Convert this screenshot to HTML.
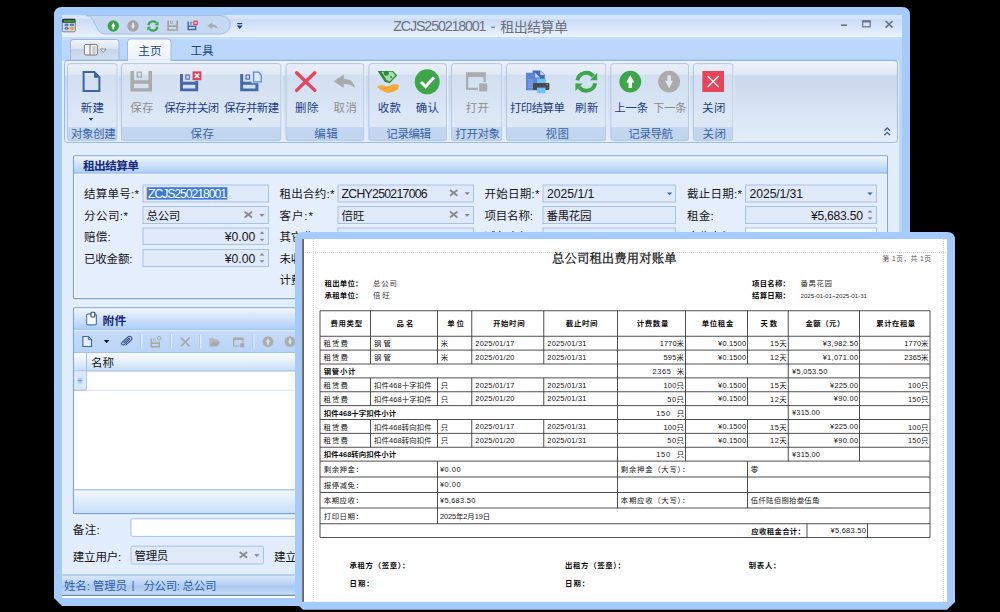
<!DOCTYPE html>
<html lang="zh"><head><meta charset="utf-8"><title>ZCJS250218001 - 租出结算单</title>
<style>
html,body{margin:0;padding:0;background:#000;}
body{width:1000px;height:612px;position:relative;overflow:hidden;font-family:"Liberation Sans",sans-serif;}
svg.layer{position:absolute;left:0;top:0;display:block}
svg.layer text{font-family:"Liberation Sans","Noto Sans CJK SC",sans-serif}
#txt span{position:absolute;white-space:nowrap;overflow:hidden;color:transparent;line-height:1.1;height:1.1em}
#txt{position:absolute;left:0;top:0;width:1000px;height:612px;overflow:hidden}
</style></head><body>
<svg width="0" height="0" style="position:absolute"><defs>
<linearGradient id="gTitle" x1="0" y1="0" x2="0" y2="1"><stop offset="0" stop-color="#d8e6fb"/><stop offset="0.18" stop-color="#d6e4fa"/><stop offset="0.19" stop-color="#c8dbf6"/><stop offset="1" stop-color="#eaf2fd"/></linearGradient>
<linearGradient id="gApp" x1="0" y1="0" x2="0" y2="1"><stop offset="0" stop-color="#f2f5fa"/><stop offset="0.45" stop-color="#d9e3f1"/><stop offset="0.46" stop-color="#c4d4e9"/><stop offset="1" stop-color="#d3e0f0"/></linearGradient>
<linearGradient id="gTab" x1="0" y1="0" x2="0" y2="1"><stop offset="0" stop-color="#f9fbfe"/><stop offset="1" stop-color="#ecf1f9"/></linearGradient>
<linearGradient id="gRib" x1="0" y1="0" x2="0" y2="1"><stop offset="0" stop-color="#eff2fa"/><stop offset="0.18" stop-color="#dfe7f4"/><stop offset="0.185" stop-color="#cad8ec"/><stop offset="1" stop-color="#e4eefb"/></linearGradient>
<linearGradient id="gGrp" x1="0" y1="0" x2="0" y2="1"><stop offset="0" stop-color="#e9eff9"/><stop offset="0.14" stop-color="#e1e9f5"/><stop offset="0.145" stop-color="#d1dff1"/><stop offset="0.82" stop-color="#deE9f7"/><stop offset="0.825" stop-color="#c3d7f0"/><stop offset="1" stop-color="#c1d5ee"/></linearGradient>
<linearGradient id="gHdr" x1="0" y1="0" x2="0" y2="1"><stop offset="0" stop-color="#f0f6ff"/><stop offset="0.3" stop-color="#dbe9fd"/><stop offset="1" stop-color="#adcef8"/></linearGradient>
<linearGradient id="gTb" x1="0" y1="0" x2="0" y2="1"><stop offset="0" stop-color="#c6dcf9"/><stop offset="1" stop-color="#b9d4f7"/></linearGradient>
<linearGradient id="gGh" x1="0" y1="0" x2="0" y2="1"><stop offset="0" stop-color="#fbfdff"/><stop offset="0.4" stop-color="#e9f1fc"/><stop offset="1" stop-color="#c5dcf8"/></linearGradient>
<linearGradient id="gFt" x1="0" y1="0" x2="0" y2="1"><stop offset="0" stop-color="#f4f8fe"/><stop offset="1" stop-color="#c9dff9"/></linearGradient>
<linearGradient id="gSb" x1="0" y1="0" x2="0" y2="1"><stop offset="0" stop-color="#dbe8fb"/><stop offset="0.5" stop-color="#b7d0f3"/><stop offset="0.55" stop-color="#a9c7f0"/><stop offset="1" stop-color="#c9ddf8"/></linearGradient>
</defs></svg>
<svg class="layer" id="win1" width="1000" height="612" viewBox="0 0 1000 612">
<path d="M62 7H902Q910 7 910 15V598L902 606H62L54 598V15Q54 7 62 7Z" fill="#a4cbfb"/>
<rect x="62" y="15" width="840" height="22" fill="url(#gTitle)"/>
<rect x="62" y="36.5" width="840" height="1" fill="#f0f7ff"/>
<rect x="62" y="37.5" width="840" height="1" fill="#b5d3fa"/>
<rect x="62" y="38.5" width="840" height="1" fill="#e1edfd"/>
<rect x="62" y="39.5" width="840" height="22" fill="#bbd8fc"/>
<rect x="62" y="61" width="840" height="514" fill="#e2edfd"/>
<rect x="899" y="38" width="3" height="537" fill="#c0d6f6"/>
<path d="M86 15.5C97 15.5 94 34 105 34H221A9.25 9.25 0 0 0 221 15.5Z" fill="#c6d9f3" stroke="#9fbadf" stroke-width="0.9"/>
<rect x="62.3" y="19" width="13" height="12.8" fill="#dcdad5" rx="1.2" stroke="#6d6a66" stroke-width="0.8"/>
<rect x="62.3" y="19" width="13" height="3.7" fill="#2b2b2b" rx="1"/>
<rect x="63.8" y="20" width="10.8" height="2" fill="#2f9a2f"/>
<ellipse cx="66.6" cy="24.9" rx="2.1" ry="1.4" fill="#2f6fc4"/>
<circle cx="66.6" cy="24.9" r="0.5" fill="#eef3fb"/>
<ellipse cx="71.9" cy="24.9" rx="2.1" ry="1.4" fill="#2f6fc4"/>
<circle cx="71.9" cy="24.9" r="0.5" fill="#eef3fb"/>
<ellipse cx="66.6" cy="28.4" rx="2.1" ry="1.4" fill="#2f6fc4"/>
<circle cx="66.6" cy="28.4" r="0.5" fill="#eef3fb"/>
<ellipse cx="71.9" cy="28.4" rx="2.1" ry="1.4" fill="#f08a24"/>
<circle cx="71.9" cy="28.4" r="0.5" fill="#eef3fb"/>
<circle cx="113.3" cy="26" r="5.7" fill="#3da34a"/>
<path d="M113.3 22.58L115.41 26.46H114.21V29.31H112.39V26.46H111.19Z" fill="#fff"/>
<circle cx="133" cy="26" r="5.7" fill="#a3a3a3"/>
<path d="M133 29.42L135.11 25.54H133.91V22.69H132.09V25.54H130.89Z" fill="#dfe6f0"/>
<path d="M148.36 25.28A4.59 4.59 0 0 1 156.52 23.17" fill="none" stroke="#3da34a" stroke-width="2.02"/>
<path d="M158.5 21.3V25.16H154.75Z" fill="#3da34a"/>
<path d="M157.44 26.72A4.59 4.59 0 0 1 149.28 28.83" fill="none" stroke="#3da34a" stroke-width="2.02"/>
<path d="M147.3 30.7V26.84H151.05Z" fill="#3da34a"/>
<path d="M167.3 20.6H169.05V25.22H176.25V20.6H178V30.81H167.3ZM169.05 26.92H176.25V29.16H169.05Z" fill="#a7a29c" fill-rule="evenodd"/>
<rect x="170.7" y="21.18" width="2.04" height="2.43" fill="none" stroke="#a7a29c" stroke-width="0.63"/>
<path d="M187.4 21.6H188.87V25.49H194.93V21.6H196.4V30.19H187.4ZM188.87 26.92H194.93V28.8H188.87Z" fill="#4468a9" fill-rule="evenodd"/>
<rect x="190.26" y="22.09" width="1.72" height="2.05" fill="none" stroke="#4468a9" stroke-width="0.53"/>
<rect x="192.6" y="20.2" width="5.6" height="5.4" fill="#c8dbf4"/>
<rect x="193.2" y="20.6" width="4.6" height="4.6" fill="#e4405a"/>
<path d="M194.35 21.75L196.65 24.05M196.65 21.75L194.35 24.05" fill="none" stroke="#fff" stroke-width="0.78"/>
<path d="M207.3 25.67L212.15 22.4V24.38C215.22 24.38 217.45 26.36 217.7 28.94C216.21 27.35 214.23 26.96 212.15 26.96V28.94Z" fill="#a9a9a9"/>
<rect x="237.2" y="23" width="5" height="1.2" fill="#1c3d86"/>
<path d="M236.8 25.6H242.6L239.7 29Z" fill="#1c3d86"/>
<text x="393.3" y="31.2" font-size="14.3" fill="#6f7080" textLength="93.2">ZCJS250218001</text>
<rect x="491.3" y="26.6" width="3.6" height="1.2" fill="#6f7080"/>
<text x="500.2" y="31.59" font-size="14" fill="#6f7080" textLength="67.8">租出结算单</text>
<rect x="841" y="24.4" width="6" height="1.6" fill="#6a7283"/>
<rect x="862.6" y="21" width="7.6" height="5.8" fill="none" stroke="#6a7283" stroke-width="1.2"/>
<rect x="862" y="20.4" width="8.8" height="2" fill="#6a7283"/>
<path d="M885.6 21L892.6 27.6M892.6 21L885.6 27.6" fill="none" stroke="#6a7283" stroke-width="1.7"/>
<path d="M70.5 61V42Q70.5 39.5 73 39.5H116.5Q119 39.5 119 42V61Z" fill="url(#gApp)" stroke="#9db6d9" stroke-width="1"/>
<rect x="84.4" y="44.4" width="13" height="10.6" fill="#f4f4f4" rx="1.6" stroke="#777" stroke-width="1"/>
<path d="M90 44.4L90 55" stroke="#777" stroke-width="1" fill="none"/>
<path d="M92.5 47H95.5M92.5 49H95.5M92.5 51H95.5M92.5 53H95.5" fill="none" stroke="#8a8a8a" stroke-width="0.8"/>
<path d="M100.4 49H106L103.2 52.4Z" fill="#f4f4f4" stroke="#777" stroke-width="0.8"/>
<path d="M127.5 61.5V42Q127.5 39 130.5 39H168Q171 39 171 42V61.5Z" fill="url(#gTab)" stroke="#9bb9e2" stroke-width="1"/>
<text x="138.2" y="55.07" font-size="11.6" fill="#20458f" textLength="23.4">主页</text>
<text x="190.6" y="55.07" font-size="11.6" fill="#20458f" textLength="23">工具</text>
<rect x="64.5" y="60.5" width="833" height="82" fill="url(#gRib)" rx="3" stroke="#9dbbe6" stroke-width="1"/>
<path d="M66 60.2L896 60.2" stroke="#8db4ea" stroke-width="1" fill="none"/>
<rect x="128.1" y="59.5" width="42.4" height="2" fill="#ecf1f9"/>
<rect x="67.5" y="63.6" width="49.6" height="77" fill="url(#gGrp)" rx="2.5" stroke="#b3c8e6" stroke-width="1"/>
<path d="M118.2 66L118.2 139" stroke="#f2f6fc" stroke-width="0.8" fill="none"/>
<text x="70.91" y="138.03" font-size="11.5" fill="#3a62a8" textLength="44.78">对象创建</text>
<rect x="121.5" y="63.6" width="159.4" height="77" fill="url(#gGrp)" rx="2.5" stroke="#b3c8e6" stroke-width="1"/>
<path d="M282 66L282 139" stroke="#f2f6fc" stroke-width="0.8" fill="none"/>
<text x="190.5" y="138.03" font-size="11.5" fill="#3a62a8" textLength="23.39">保存</text>
<rect x="286.1" y="63.6" width="77.8" height="77" fill="url(#gGrp)" rx="2.5" stroke="#b3c8e6" stroke-width="1"/>
<path d="M365 66L365 139" stroke="#f2f6fc" stroke-width="0.8" fill="none"/>
<text x="314.31" y="138.03" font-size="11.5" fill="#3a62a8" textLength="23.39">编辑</text>
<rect x="368.9" y="63.6" width="77.6" height="77" fill="url(#gGrp)" rx="2.5" stroke="#b3c8e6" stroke-width="1"/>
<path d="M447.6 66L447.6 139" stroke="#f2f6fc" stroke-width="0.8" fill="none"/>
<text x="386.31" y="138.03" font-size="11.5" fill="#3a62a8" textLength="44.78">记录编辑</text>
<rect x="451.5" y="63.6" width="50.4" height="77" fill="url(#gGrp)" rx="2.5" stroke="#b3c8e6" stroke-width="1"/>
<path d="M503 66L503 139" stroke="#f2f6fc" stroke-width="0.8" fill="none"/>
<text x="455.31" y="138.03" font-size="11.5" fill="#3a62a8" textLength="44.78">打开对象</text>
<rect x="506.5" y="63.6" width="99.4" height="77" fill="url(#gGrp)" rx="2.5" stroke="#b3c8e6" stroke-width="1"/>
<path d="M607 66L607 139" stroke="#f2f6fc" stroke-width="0.8" fill="none"/>
<text x="545.5" y="138.03" font-size="11.5" fill="#3a62a8" textLength="23.39">视图</text>
<rect x="610.9" y="63.6" width="77.6" height="77" fill="url(#gGrp)" rx="2.5" stroke="#b3c8e6" stroke-width="1"/>
<path d="M689.6 66L689.6 139" stroke="#f2f6fc" stroke-width="0.8" fill="none"/>
<text x="628.31" y="138.03" font-size="11.5" fill="#3a62a8" textLength="44.78">记录导航</text>
<rect x="693.5" y="63.6" width="39.4" height="77" fill="url(#gGrp)" rx="2.5" stroke="#b3c8e6" stroke-width="1"/>
<path d="M734 66L734 139" stroke="#f2f6fc" stroke-width="0.8" fill="none"/>
<text x="702.5" y="138.03" font-size="11.5" fill="#3a62a8" textLength="23.39">关闭</text>
<path d="M83.6 72H94.4L99.4 77.4V91H83.6Z" fill="none" stroke="#3c63a8" stroke-width="2" stroke-linejoin="miter"/>
<path d="M94 71.4L100 77.8H94Z" fill="#3c63a8"/>
<text x="80.7" y="111.79" font-size="11.4" fill="#1c3d86" textLength="23.2">新建</text>
<path d="M88.6 117.9H93.4L91 120.7Z" fill="#1c3d86"/>
<path d="M130.4 71H133.93V80.33H148.47V71H152V91.62H130.4ZM133.93 83.76H148.47V88.28H133.93Z" fill="#aaaaaa" fill-rule="evenodd"/>
<rect x="137.27" y="72.18" width="4.12" height="4.91" fill="none" stroke="#aaaaaa" stroke-width="1.28"/>
<text x="130.2" y="111.79" font-size="11.4" fill="#8e8e8e" textLength="23.2">保存</text>
<path d="M180 74H182.98V81.86H195.22V74H198.2V91.37H180ZM182.98 84.75H195.22V88.56H182.98Z" fill="#4468a9" fill-rule="evenodd"/>
<rect x="185.79" y="74.99" width="3.47" height="4.14" fill="none" stroke="#4468a9" stroke-width="1.08"/>
<rect x="191.6" y="70.6" width="10.6" height="10.2" fill="#d6e2f2"/>
<rect x="192.6" y="71.4" width="8.8" height="8.8" fill="#e4405a"/>
<path d="M194.8 73.6L199.2 78M199.2 73.6L194.8 78" fill="none" stroke="#fff" stroke-width="1.5"/>
<text x="164.19" y="111.79" font-size="11.4" fill="#1c3d86" textLength="55.01">保存并关闭</text>
<path d="M240.2 74H243.18V81.86H255.42V74H258.4V91.37H240.2ZM243.18 84.75H255.42V88.56H243.18Z" fill="#4468a9" fill-rule="evenodd"/>
<rect x="245.99" y="74.99" width="3.47" height="4.14" fill="none" stroke="#4468a9" stroke-width="1.08"/>
<rect x="251.6" y="70.6" width="11" height="12.6" fill="#d6e2f2"/>
<path d="M253.6 72.2H258.6L261.2 75V81.8H253.6Z" fill="#dfe9f8" stroke="#5a8ad8" stroke-width="1.3"/>
<text x="224.09" y="111.79" font-size="11.4" fill="#1c3d86" textLength="55.01">保存并新建</text>
<path d="M247.8 117.9H252.6L250.2 120.7Z" fill="#1c3d86"/>
<path d="M296.6 72.8L314.8 90.4M314.8 72.8L296.6 90.4" fill="none" stroke="#e8445c" stroke-width="3.4" stroke-linecap="round"/>
<text x="295.1" y="111.79" font-size="11.4" fill="#1c3d86" textLength="23.2">删除</text>
<path d="M333.8 81.26L343.69 74.6V78.64C349.95 78.64 354.5 82.68 355 87.93C351.97 84.7 347.93 83.89 343.69 83.89V87.93Z" fill="#aaaaaa"/>
<text x="333.6" y="111.79" font-size="11.4" fill="#8e8e8e" textLength="23.2">取消</text>
<path d="M377.6 70.9H393L397.2 75.6L389.6 83.2L384.7 81.7Z" fill="#2a8b3b"/>
<path d="M381.4 71.7H392.3L395.4 75.6L389.6 81.4L386.8 80.3Z" fill="#a6dbac"/>
<circle cx="386.3" cy="73.3" r="2.5" fill="#2a8b3b"/>
<circle cx="391.1" cy="77" r="1" fill="#2a8b3b"/>
<path d="M377.1 86.8C378.5 85 381.5 84.8 384 85.6L387 86.7L392.6 84.6C395 83.8 398 84.4 399 85.8L397.8 89.4C394 91.6 390 92.8 387.6 92.8C384 92.4 380 90 377.1 86.8Z" fill="#f7a93a"/>
<path d="M383.4 88.6L389.6 87.2" fill="none" stroke="#d98d25" stroke-width="0.7"/>
<text x="377.7" y="111.79" font-size="11.4" fill="#1c3d86" textLength="23.2">收款</text>
<circle cx="427.2" cy="81.8" r="12.5" fill="#3fa54b"/>
<path d="M421 82L425.6 86.6L434 77.4" fill="none" stroke="#fff" stroke-width="3" stroke-linejoin="miter"/>
<text x="415.7" y="111.79" font-size="11.4" fill="#1c3d86" textLength="23.2">确认</text>
<path d="M466 72.2H485.8V82H483.6V77H468.2V87.8H477.8V90H466Z" fill="#ababab"/>
<rect x="479.2" y="83.4" width="8" height="8" fill="#ababab"/>
<text x="465.7" y="111.79" font-size="11.4" fill="#8e8e8e" textLength="23.2">打开</text>
<path d="M532.6 70.4H540.6L544.8 74.6V80H532.6Z" fill="#466bb3"/>
<path d="M540.4 70.6V75H544.6Z" fill="#c9d8f0"/>
<path d="M526 72.8H535.4L540 77.4V90.2H526Z" fill="#5c86d8"/>
<path d="M535.2 73V77.6H539.8Z" fill="#c9d8f0"/>
<path d="M528 80H533M528 82.4H533M528 84.8H533M528 87.2H533" fill="none" stroke="#8daae6" stroke-width="1"/>
<rect x="537" y="78.8" width="9" height="5" fill="#6ec4f6"/>
<rect x="533" y="83" width="16.4" height="7" fill="#4b4b4d" rx="1.2"/>
<rect x="537" y="87.6" width="8.6" height="5.6" fill="#6ec4f6"/>
<circle cx="547.2" cy="84.8" r="0.8" fill="#35c46a"/>
<text x="509.89" y="111.79" font-size="11.4" fill="#1c3d86" textLength="55.01">打印结算单</text>
<path d="M577.47 80.4A8.94 8.94 0 0 1 593.34 76.3" fill="none" stroke="#3fa54b" stroke-width="3.92"/>
<path d="M597.2 72.64V80.16H589.9Z" fill="#3fa54b"/>
<path d="M595.13 83.2A8.94 8.94 0 0 1 579.26 87.3" fill="none" stroke="#3fa54b" stroke-width="3.92"/>
<path d="M575.4 90.96V83.44H582.7Z" fill="#3fa54b"/>
<text x="575.1" y="111.79" font-size="11.4" fill="#1c3d86" textLength="23.2">刷新</text>
<circle cx="630.3" cy="81.6" r="10.9" fill="#3fa54b"/>
<path d="M630.3 75.06L634.33 82.47H632.04V87.92H628.56V82.47H626.27Z" fill="#fff"/>
<text x="614.3" y="111.79" font-size="11.4" fill="#1c3d86" textLength="33.81">上一条</text>
<circle cx="669.1" cy="81.6" r="10.9" fill="#ababab"/>
<path d="M669.1 88.14L673.13 80.73H670.84V75.28H667.36V80.73H665.07Z" fill="#dde6f3"/>
<text x="652.9" y="111.79" font-size="11.4" fill="#8e8e8e" textLength="33.81">下一条</text>
<rect x="702.3" y="71" width="21.7" height="21" fill="#e8445c"/>
<path d="M707.6 76L718.8 87M718.8 76L707.6 87" fill="none" stroke="#f4f8fb" stroke-width="1.4"/>
<text x="702.1" y="111.79" font-size="11.4" fill="#1c3d86" textLength="23.2">关闭</text>
<path d="M884.4 130.8L887.2 128L890 130.8M884.4 135.2L887.2 132.4L890 135.2" fill="none" stroke="#3c5f9f" stroke-width="1.25"/>
<rect x="72.9" y="156.4" width="815.4" height="143.7" fill="none" rx="1.5" stroke="#f4f8fe" stroke-width="1.2"/>
<rect x="73.5" y="156" width="814" height="142.5" fill="#e4eefd" rx="1" stroke="#78a4e0" stroke-width="1.3"/>
<rect x="74.5" y="157" width="812" height="140.5" fill="none" stroke="#f6f9fe" stroke-width="1"/>
<rect x="74" y="156.5" width="813" height="16.5" fill="url(#gHdr)"/>
<path d="M74 173.2L887 173.2" stroke="#86aee6" stroke-width="1.1" fill="none"/>
<path d="M74.5 174.2L886.5 174.2" stroke="#f4f8fe" stroke-width="0.9" fill="none"/>
<text x="83" y="170.04" font-size="11.8" font-weight="bold" fill="#18297c" textLength="56">租出结算单</text>
<text x="84" y="198.23" font-size="11.5" fill="#161616" textLength="55">结算单号:*</text>
<rect x="143" y="185" width="125.5" height="17" fill="#dfe9f9" stroke="#a9c1e4" stroke-width="1"/>
<text x="279.5" y="198.23" font-size="11.5" fill="#161616" textLength="55">租出合约:*</text>
<rect x="338" y="185" width="135.5" height="17" fill="#dfe9f9" stroke="#a9c1e4" stroke-width="1"/>
<text x="484.5" y="198.23" font-size="11.5" fill="#161616" textLength="55">开始日期:*</text>
<rect x="543" y="185" width="132.5" height="17" fill="#dfe9f9" stroke="#a9c1e4" stroke-width="1"/>
<text x="687" y="198.23" font-size="11.5" fill="#161616" textLength="55">截止日期:*</text>
<rect x="745.5" y="185" width="131" height="17" fill="#dfe9f9" stroke="#a9c1e4" stroke-width="1"/>
<rect x="147" y="187.2" width="80.4" height="12.4" fill="#3b7bd6"/>
<rect x="146.6" y="187.2" width="0.9" height="12.4" fill="#c9772e"/>
<text x="148" y="198.07" font-size="12.2" fill="#ffffff" textLength="79">ZCJS250218001</text>
<text x="341.6" y="198.07" font-size="12.2" fill="#161616" textLength="86">ZCHY250217006</text>
<path d="M450 189.9L457.4 195.7M457.4 189.9L450 195.7" fill="none" stroke="#8c8c8c" stroke-width="1.9"/>
<path d="M464.6 192.3H469.8L467.2 195.1Z" fill="#7d8796"/>
<text x="547" y="198.07" font-size="12.2" fill="#161616" textLength="47.4">2025/1/1</text>
<path d="M667 192.5H672.2L669.6 195.3Z" fill="#3767b0"/>
<text x="749.6" y="198.07" font-size="12.2" fill="#161616" textLength="53.4">2025/1/31</text>
<path d="M867.4 192.5H872.6L870 195.3Z" fill="#3767b0"/>
<text x="84" y="219.73" font-size="11.5" fill="#161616" textLength="44">分公司:*</text>
<rect x="143" y="206.5" width="125.5" height="17" fill="#dfe9f9" stroke="#a9c1e4" stroke-width="1"/>
<text x="146.6" y="219.73" font-size="11.5" fill="#161616" textLength="33.6">总公司</text>
<path d="M244.6 211.7L252 217.5M252 211.7L244.6 217.5" fill="none" stroke="#8c8c8c" stroke-width="1.9"/>
<path d="M259.4 213.9H264.6L262 216.7Z" fill="#7d8796"/>
<text x="279.5" y="219.73" font-size="11.5" fill="#161616" textLength="33.4">客户:*</text>
<rect x="338" y="206.5" width="135.5" height="17" fill="#dfe9f9" stroke="#a9c1e4" stroke-width="1"/>
<text x="341.6" y="219.73" font-size="11.5" fill="#161616" textLength="23">倍旺</text>
<path d="M450 211.6L457.4 217.4M457.4 211.6L450 217.4" fill="none" stroke="#8c8c8c" stroke-width="1.9"/>
<path d="M464.6 213.9H469.8L467.2 216.7Z" fill="#7d8796"/>
<text x="484.5" y="219.73" font-size="11.5" fill="#161616" textLength="48.4">项目名称:</text>
<rect x="543" y="206.5" width="132.5" height="17" fill="#dfe9f9" stroke="#a9c1e4" stroke-width="1"/>
<text x="546.4" y="219.73" font-size="11.5" fill="#161616" textLength="45.2">番禺花园</text>
<text x="687" y="219.73" font-size="11.5" fill="#161616" textLength="26.6">租金:</text>
<rect x="745.5" y="206.5" width="131" height="17" fill="#dfe9f9" stroke="#a9c1e4" stroke-width="1"/>
<text x="811" y="219.57" font-size="12.2" fill="#161616" textLength="52">¥5,683.50</text>
<path d="M867.6 212.5H872.4L870 210.1Z" fill="#7d8796"/>
<path d="M867.6 217.3H872.4L870 219.7Z" fill="#7d8796"/>
<text x="84" y="240.98" font-size="11.5" fill="#161616" textLength="26.6">赔偿:</text>
<rect x="143" y="228" width="125.5" height="16.5" fill="#dfe9f9" stroke="#a9c1e4" stroke-width="1"/>
<text x="224.8" y="240.82" font-size="12.2" fill="#161616" textLength="30.4">¥0.00</text>
<path d="M259.6 234H264.4L262 231.6Z" fill="#7d8796"/>
<path d="M259.6 238.8H264.4L262 241.2Z" fill="#7d8796"/>
<text x="279.5" y="240.98" font-size="11.5" fill="#161616" textLength="48.4">其它费用:</text>
<rect x="338" y="228" width="135.5" height="16.5" fill="#dfe9f9" stroke="#a9c1e4" stroke-width="1"/>
<text x="484.5" y="240.98" font-size="11.5" fill="#161616" textLength="48.4">减免金额:</text>
<rect x="543" y="228" width="132.5" height="16.5" fill="#dfe9f9" stroke="#a9c1e4" stroke-width="1"/>
<text x="687" y="240.98" font-size="11.5" fill="#161616" textLength="48.4">应收金额:</text>
<rect x="745.5" y="228" width="131" height="16.5" fill="#f8fbff" stroke="#a9c1e4" stroke-width="1"/>
<text x="84" y="262.73" font-size="11.5" fill="#161616" textLength="48.4">已收金额:</text>
<rect x="143" y="249.5" width="125.5" height="17" fill="#dfe9f9" stroke="#a9c1e4" stroke-width="1"/>
<text x="224.8" y="262.57" font-size="12.2" fill="#161616" textLength="30.4">¥0.00</text>
<path d="M259.6 255.5H264.4L262 253.1Z" fill="#7d8796"/>
<path d="M259.6 260.3H264.4L262 262.7Z" fill="#7d8796"/>
<text x="279.5" y="262.73" font-size="11.5" fill="#161616" textLength="48.4">未收金额:</text>
<text x="279.5" y="284.43" font-size="11.5" fill="#161616" textLength="48.4">计费方式:</text>
<rect x="72.9" y="308.4" width="815.4" height="206.7" fill="none" rx="1.5" stroke="#f4f8fe" stroke-width="1.2"/>
<rect x="73.5" y="308" width="814" height="205.5" fill="#ffffff" rx="1" stroke="#78a4e0" stroke-width="1.3"/>
<rect x="74.5" y="309" width="812" height="203.5" fill="none" stroke="#f6f9fe" stroke-width="1"/>
<rect x="74" y="308.5" width="813" height="21.3" fill="url(#gHdr)"/>
<path d="M74 330L887 330" stroke="#86aee6" stroke-width="1.1" fill="none"/>
<path d="M74.5 331L886.5 331" stroke="#f4f8fe" stroke-width="0.9" fill="none"/>
<rect x="86.6" y="314.2" width="9.8" height="10.6" fill="#fbfdff" rx="1.4" stroke="#4a78c0" stroke-width="1.2"/>
<rect x="91" y="312.2" width="3.8" height="4.8" fill="#fbfdff" rx="0.8" stroke="#32466e" stroke-width="1.1"/>
<text x="102.6" y="324.74" font-size="11.8" font-weight="bold" fill="#18297c" textLength="23.6">附件</text>
<rect x="74" y="330" width="813" height="23" fill="url(#gTb)"/>
<rect x="74" y="330" width="813" height="1" fill="#e6f0fd"/>
<path d="M82.9 336.5H88.6L91.5 339.4V346.5H82.9Z" fill="#e6effc" stroke="#3e62a8" stroke-width="1.1"/>
<path d="M88.4 336.6V339.6H91.4" fill="none" stroke="#3e62a8" stroke-width="0.9"/>
<path d="M103.8 340H109.4L106.6 343.2Z" fill="#111"/>
<path d="M-3 -0.9H4A0.9 0.9 0 0 1 4 0.9H-4.6A1.8 1.8 0 0 1 -4.6 -2.7H5A2.7 2.7 0 0 1 5 2.7H-3.5" fill="none" stroke="#2c4a85" stroke-width="1.15" stroke-linecap="round" transform="translate(126.4,341.4) rotate(-42) scale(0.84)"/>
<path d="M141.6 334.5L141.6 348.5" stroke="#eaf2fd" stroke-width="1.2" fill="none"/>
<path d="M140.6 334.5L140.6 348.5" stroke="#a8c2e6" stroke-width="0.8" fill="none"/>
<path d="M171.4 334.5L171.4 348.5" stroke="#eaf2fd" stroke-width="1.2" fill="none"/>
<path d="M170.4 334.5L170.4 348.5" stroke="#a8c2e6" stroke-width="0.8" fill="none"/>
<path d="M200.6 334.5L200.6 348.5" stroke="#eaf2fd" stroke-width="1.2" fill="none"/>
<path d="M199.6 334.5L199.6 348.5" stroke="#a8c2e6" stroke-width="0.8" fill="none"/>
<path d="M253.8 334.5L253.8 348.5" stroke="#eaf2fd" stroke-width="1.2" fill="none"/>
<path d="M252.8 334.5L252.8 348.5" stroke="#a8c2e6" stroke-width="0.8" fill="none"/>
<path d="M150.4 338.4H151.97V342.55H158.43V338.4H160V347.56H150.4ZM151.97 344.07H158.43V346.08H151.97Z" fill="#a9a9a9" fill-rule="evenodd"/>
<rect x="153.45" y="338.92" width="1.83" height="2.18" fill="none" stroke="#a9a9a9" stroke-width="0.57"/>
<rect x="156.4" y="336" width="5.4" height="5.4" fill="#bed8f8"/>
<circle cx="159.2" cy="338.2" r="1.8" fill="none" stroke="#a9a9a9" stroke-width="1"/>
<path d="M180.8 337.6L189.6 346.4M189.6 337.6L180.8 346.4" fill="none" stroke="#a9a9a9" stroke-width="1.6"/>
<path d="M209.4 338.2H213.4L214.6 339.6H218.4V341.4H211.6L209.4 346.4Z" fill="#b4b4b4"/>
<path d="M209.6 346.6L211.8 341.6H220L217.6 346.6Z" fill="#a9a9a9"/>
<path d="M233 337.4H243.6V342.4H242.4V340H234.2V345.4H239.4V346.6H233Z" fill="#a9a9a9"/>
<rect x="240.2" y="343.2" width="4" height="4" fill="#a9a9a9"/>
<circle cx="268" cy="341.6" r="5.4" fill="#adadad"/>
<path d="M268 338.36L270 342.03H268.86V344.73H267.14V342.03H266Z" fill="#d9e5f6"/>
<circle cx="290" cy="341.6" r="5.4" fill="#adadad"/>
<path d="M290 344.84L292 341.17H290.86V338.47H289.14V341.17H288Z" fill="#d9e5f6"/>
<rect x="74" y="353" width="813" height="18" fill="url(#gGh)"/>
<path d="M74 352.6L887 352.6" stroke="#9dbde8" stroke-width="0.8" fill="none"/>
<path d="M74 371L887 371" stroke="#9dbde8" stroke-width="1" fill="none"/>
<path d="M86.6 353L86.6 390" stroke="#9dbde8" stroke-width="1" fill="none"/>
<text x="91" y="367.43" font-size="11.5" fill="#161616" textLength="23">名称</text>
<rect x="74" y="371.5" width="12.2" height="18.5" fill="#dbe8fa"/>
<path d="M74 390.2L887 390.2" stroke="#d3e1f4" stroke-width="1" fill="none"/>
<path d="M74 390.2L86.6 390.2" stroke="#9dbde8" stroke-width="1" fill="none"/>
<path d="M77 380.6H83M80 377.6V383.6M77.9 378.5L82.1 382.7M82.1 378.5L77.9 382.7" fill="none" stroke="#7fa9e6" stroke-width="0.9"/>
<rect x="74" y="490" width="813" height="23" fill="url(#gFt)"/>
<path d="M74 489.8L887 489.8" stroke="#8db0e0" stroke-width="1" fill="none"/>
<text x="72.8" y="533.63" font-size="11.5" fill="#161616" textLength="27">备注:</text>
<rect x="131" y="518.8" width="760" height="17.6" fill="#ffffff" rx="1.5" stroke="#a9c1e3" stroke-width="1"/>
<text x="72.8" y="561.03" font-size="11.5" fill="#161616" textLength="48.4">建立用户:</text>
<rect x="131" y="546.2" width="132.5" height="17.8" fill="#dfe9f9" rx="1.5" stroke="#a9c1e4" stroke-width="1"/>
<text x="134.6" y="560.03" font-size="11.5" fill="#161616" textLength="33.6">管理员</text>
<path d="M239.7 551.9L247.1 557.7M247.1 551.9L239.7 557.7" fill="none" stroke="#8c8c8c" stroke-width="1.9"/>
<path d="M254.2 554.3H259.4L256.8 557.1Z" fill="#7d8796"/>
<text x="274" y="561.03" font-size="11.5" fill="#161616" textLength="48.4">建立时间:</text>
<rect x="62" y="575" width="840" height="20" fill="url(#gSb)"/>
<path d="M62 575L902 575" stroke="#8fb3e6" stroke-width="1" fill="none"/>
<rect x="62" y="594.8" width="840" height="1.1" fill="#5d7899"/>
<rect x="62" y="595.9" width="840" height="2.1" fill="#fbfdff"/>
<text x="64" y="590.23" font-size="11.5" fill="#2e5da6" textLength="63">姓名: 管理员</text>
<text x="131.6" y="589.42" font-size="11.5" fill="#2e5da6">|</text>
<text x="143.4" y="590.23" font-size="11.5" fill="#2e5da6" textLength="73">分公司: 总公司</text>
</svg>
<svg class="layer" id="win2" width="1000" height="612" viewBox="0 0 1000 612">
<path d="M303 232H947Q955 232 955 240V602L947 609.8H303L295 602V240Q295 232 303 232Z" fill="#a4cbfb"/>
<rect x="303" y="239" width="644" height="362.9" fill="#ffffff"/>
<rect x="302.2" y="239" width="1.8" height="362.9" fill="#7a6248"/>
<path d="M313.3 239L313.3 602" stroke="#cdcdcd" stroke-width="0.9" fill="none" stroke-dasharray="1 1"/>
<path d="M943.6 239L943.6 602" stroke="#cdcdcd" stroke-width="0.9" fill="none" stroke-dasharray="1 1"/>
<path d="M305 252.6L947 252.6" stroke="#cdcdcd" stroke-width="0.9" fill="none" stroke-dasharray="1 1"/>
<text x="552" y="263.34" font-size="12.3" fill="#111" stroke="#111" stroke-width="0.27" textLength="124.5" style="font-family:'Liberation Serif','Noto Serif CJK SC',serif">总公司租出费用对账单</text>
<text x="882.5" y="260.88" font-size="6.7" fill="#555" textLength="48.5">第 1页，共 1页</text>
<text x="324.5" y="285.85" font-size="7.4" font-weight="bold" fill="#0c0c0c" textLength="38">租出单位：</text>
<text x="373" y="285.85" font-size="7.4" fill="#333" textLength="24">总公司</text>
<text x="324.5" y="298.45" font-size="7.4" font-weight="bold" fill="#0c0c0c" textLength="38">承租单位：</text>
<text x="373" y="298.45" font-size="7.4" fill="#333" textLength="16.6">倍旺</text>
<text x="752" y="285.85" font-size="7.4" font-weight="bold" fill="#0c0c0c" textLength="38">项目名称：</text>
<text x="800.5" y="285.85" font-size="7.4" fill="#333" textLength="31.5">番禺花园</text>
<text x="752" y="298.45" font-size="7.4" font-weight="bold" fill="#0c0c0c" textLength="38">结算日期：</text>
<text x="800.5" y="297.77" font-size="6.2" fill="#333" textLength="66.5">2025-01-01~2025-01-31</text>
<path d="M320 310.75L930 310.75" stroke="#303030" stroke-width="0.85" fill="none"/>
<path d="M320 336.25L930 336.25" stroke="#303030" stroke-width="0.85" fill="none"/>
<path d="M320 310.75L320 336.25" stroke="#303030" stroke-width="0.85" fill="none"/>
<path d="M370.5 310.75L370.5 336.25" stroke="#303030" stroke-width="0.85" fill="none"/>
<path d="M437.5 310.75L437.5 336.25" stroke="#303030" stroke-width="0.85" fill="none"/>
<path d="M471.75 310.75L471.75 336.25" stroke="#303030" stroke-width="0.85" fill="none"/>
<path d="M543.75 310.75L543.75 336.25" stroke="#303030" stroke-width="0.85" fill="none"/>
<path d="M617.5 310.75L617.5 336.25" stroke="#303030" stroke-width="0.85" fill="none"/>
<path d="M685.5 310.75L685.5 336.25" stroke="#303030" stroke-width="0.85" fill="none"/>
<path d="M747.5 310.75L747.5 336.25" stroke="#303030" stroke-width="0.85" fill="none"/>
<path d="M788.25 310.75L788.25 336.25" stroke="#303030" stroke-width="0.85" fill="none"/>
<path d="M859.5 310.75L859.5 336.25" stroke="#303030" stroke-width="0.85" fill="none"/>
<path d="M930 310.75L930 336.25" stroke="#303030" stroke-width="0.85" fill="none"/>
<text x="330.45" y="326.45" font-size="7.4" font-weight="bold" fill="#0c0c0c" textLength="31.6">费用类型</text>
<text x="396.6" y="326.45" font-size="7.4" font-weight="bold" fill="#0c0c0c" textLength="16.8">品名</text>
<text x="447.23" y="326.45" font-size="7.4" font-weight="bold" fill="#0c0c0c" textLength="16.8">单位</text>
<text x="492.95" y="326.45" font-size="7.4" font-weight="bold" fill="#0c0c0c" textLength="31.6">开始时间</text>
<text x="565.83" y="326.45" font-size="7.4" font-weight="bold" fill="#0c0c0c" textLength="31.6">截止时间</text>
<text x="636.7" y="326.45" font-size="7.4" font-weight="bold" fill="#0c0c0c" textLength="31.6">计费数量</text>
<text x="701.7" y="326.45" font-size="7.4" font-weight="bold" fill="#0c0c0c" textLength="31.6">单位租金</text>
<text x="760.48" y="326.45" font-size="7.4" font-weight="bold" fill="#0c0c0c" textLength="16.8">天数</text>
<text x="805.38" y="326.45" font-size="7.4" font-weight="bold" fill="#0c0c0c" textLength="39">金额（元）</text>
<text x="876.25" y="326.45" font-size="7.4" font-weight="bold" fill="#0c0c0c" textLength="39">累计在租量</text>
<path d="M320 350.12L930 350.12" stroke="#303030" stroke-width="0.85" fill="none"/>
<path d="M320 336.25L320 350.12" stroke="#303030" stroke-width="0.85" fill="none"/>
<path d="M370.5 336.25L370.5 350.12" stroke="#303030" stroke-width="0.85" fill="none"/>
<path d="M437.5 336.25L437.5 350.12" stroke="#303030" stroke-width="0.85" fill="none"/>
<path d="M471.75 336.25L471.75 350.12" stroke="#303030" stroke-width="0.85" fill="none"/>
<path d="M543.75 336.25L543.75 350.12" stroke="#303030" stroke-width="0.85" fill="none"/>
<path d="M617.5 336.25L617.5 350.12" stroke="#303030" stroke-width="0.85" fill="none"/>
<path d="M685.5 336.25L685.5 350.12" stroke="#303030" stroke-width="0.85" fill="none"/>
<path d="M747.5 336.25L747.5 350.12" stroke="#303030" stroke-width="0.85" fill="none"/>
<path d="M788.25 336.25L788.25 350.12" stroke="#303030" stroke-width="0.85" fill="none"/>
<path d="M859.5 336.25L859.5 350.12" stroke="#303030" stroke-width="0.85" fill="none"/>
<path d="M930 336.25L930 350.12" stroke="#303030" stroke-width="0.85" fill="none"/>
<text x="323.6" y="346.25" font-size="7.4" fill="#151515" textLength="24.2">租赁费</text>
<text x="374.1" y="346.25" font-size="7.4" fill="#151515" textLength="16.8">钢管</text>
<text x="440.7" y="346.25" font-size="7.4" fill="#151515">米</text>
<text x="475.35" y="345.99" font-size="7.4" fill="#151515" textLength="39">2025/01/17</text>
<text x="547.35" y="345.99" font-size="7.4" fill="#151515" textLength="39">2025/01/31</text>
<text x="659.8" y="346.25" font-size="7.4" fill="#151515" textLength="24.2">1770米</text>
<text x="718.1" y="345.99" font-size="7.4" fill="#151515" textLength="27.9">¥0.1500</text>
<text x="769.95" y="346.25" font-size="7.4" fill="#151515" textLength="16.8">15天</text>
<text x="822.7" y="345.99" font-size="7.4" fill="#151515" textLength="35.3">¥3,982.50</text>
<text x="904.3" y="346.25" font-size="7.4" fill="#151515" textLength="24.2">1770米</text>
<path d="M320 364L930 364" stroke="#303030" stroke-width="0.85" fill="none"/>
<path d="M320 350.12L320 364" stroke="#303030" stroke-width="0.85" fill="none"/>
<path d="M370.5 350.12L370.5 364" stroke="#303030" stroke-width="0.85" fill="none"/>
<path d="M437.5 350.12L437.5 364" stroke="#303030" stroke-width="0.85" fill="none"/>
<path d="M471.75 350.12L471.75 364" stroke="#303030" stroke-width="0.85" fill="none"/>
<path d="M543.75 350.12L543.75 364" stroke="#303030" stroke-width="0.85" fill="none"/>
<path d="M617.5 350.12L617.5 364" stroke="#303030" stroke-width="0.85" fill="none"/>
<path d="M685.5 350.12L685.5 364" stroke="#303030" stroke-width="0.85" fill="none"/>
<path d="M747.5 350.12L747.5 364" stroke="#303030" stroke-width="0.85" fill="none"/>
<path d="M788.25 350.12L788.25 364" stroke="#303030" stroke-width="0.85" fill="none"/>
<path d="M859.5 350.12L859.5 364" stroke="#303030" stroke-width="0.85" fill="none"/>
<path d="M930 350.12L930 364" stroke="#303030" stroke-width="0.85" fill="none"/>
<text x="323.6" y="360.12" font-size="7.4" fill="#151515" textLength="24.2">租赁费</text>
<text x="374.1" y="360.12" font-size="7.4" fill="#151515" textLength="16.8">钢管</text>
<text x="440.7" y="360.12" font-size="7.4" fill="#151515">米</text>
<text x="475.35" y="359.86" font-size="7.4" fill="#151515" textLength="39">2025/01/20</text>
<text x="547.35" y="359.86" font-size="7.4" fill="#151515" textLength="39">2025/01/31</text>
<text x="663.5" y="360.12" font-size="7.4" fill="#151515" textLength="20.5">595米</text>
<text x="718.1" y="359.86" font-size="7.4" fill="#151515" textLength="27.9">¥0.1500</text>
<text x="769.95" y="360.12" font-size="7.4" fill="#151515" textLength="16.8">12天</text>
<text x="822.7" y="359.86" font-size="7.4" fill="#151515" textLength="35.3">¥1,071.00</text>
<text x="904.3" y="360.12" font-size="7.4" fill="#151515" textLength="24.2">2365米</text>
<path d="M320 377.88L930 377.88" stroke="#303030" stroke-width="0.85" fill="none"/>
<path d="M320 364L320 377.88" stroke="#303030" stroke-width="0.85" fill="none"/>
<path d="M617.5 364L617.5 377.88" stroke="#303030" stroke-width="0.85" fill="none"/>
<path d="M685.5 364L685.5 377.88" stroke="#303030" stroke-width="0.85" fill="none"/>
<path d="M788.25 364L788.25 377.88" stroke="#303030" stroke-width="0.85" fill="none"/>
<path d="M859.5 364L859.5 377.88" stroke="#303030" stroke-width="0.85" fill="none"/>
<path d="M930 364L930 377.88" stroke="#303030" stroke-width="0.85" fill="none"/>
<text x="323.8" y="374" font-size="7.4" font-weight="bold" fill="#0c0c0c" textLength="31.6">钢管小计</text>
<text x="652.5" y="374" font-size="7.4" fill="#151515" textLength="31.6">2365&#160;&#160;米</text>
<text x="792.05" y="373.74" font-size="7.4" fill="#151515" textLength="35.3">¥5,053.50</text>
<path d="M320 391.75L930 391.75" stroke="#303030" stroke-width="0.85" fill="none"/>
<path d="M320 377.88L320 391.75" stroke="#303030" stroke-width="0.85" fill="none"/>
<path d="M370.5 377.88L370.5 391.75" stroke="#303030" stroke-width="0.85" fill="none"/>
<path d="M437.5 377.88L437.5 391.75" stroke="#303030" stroke-width="0.85" fill="none"/>
<path d="M471.75 377.88L471.75 391.75" stroke="#303030" stroke-width="0.85" fill="none"/>
<path d="M543.75 377.88L543.75 391.75" stroke="#303030" stroke-width="0.85" fill="none"/>
<path d="M617.5 377.88L617.5 391.75" stroke="#303030" stroke-width="0.85" fill="none"/>
<path d="M685.5 377.88L685.5 391.75" stroke="#303030" stroke-width="0.85" fill="none"/>
<path d="M747.5 377.88L747.5 391.75" stroke="#303030" stroke-width="0.85" fill="none"/>
<path d="M788.25 377.88L788.25 391.75" stroke="#303030" stroke-width="0.85" fill="none"/>
<path d="M859.5 377.88L859.5 391.75" stroke="#303030" stroke-width="0.85" fill="none"/>
<path d="M930 377.88L930 391.75" stroke="#303030" stroke-width="0.85" fill="none"/>
<text x="323.6" y="387.87" font-size="7.4" fill="#151515" textLength="24.2">租赁费</text>
<text x="374.1" y="387.87" font-size="7.4" fill="#151515" textLength="57.5">扣件468十字扣件</text>
<text x="440.7" y="387.87" font-size="7.4" fill="#151515">只</text>
<text x="475.35" y="387.61" font-size="7.4" fill="#151515" textLength="39">2025/01/17</text>
<text x="547.35" y="387.61" font-size="7.4" fill="#151515" textLength="39">2025/01/31</text>
<text x="663.5" y="387.87" font-size="7.4" fill="#151515" textLength="20.5">100只</text>
<text x="718.1" y="387.61" font-size="7.4" fill="#151515" textLength="27.9">¥0.1500</text>
<text x="769.95" y="387.87" font-size="7.4" fill="#151515" textLength="16.8">15天</text>
<text x="830.1" y="387.61" font-size="7.4" fill="#151515" textLength="27.9">¥225.00</text>
<text x="908" y="387.87" font-size="7.4" fill="#151515" textLength="20.5">100只</text>
<path d="M320 405.62L930 405.62" stroke="#303030" stroke-width="0.85" fill="none"/>
<path d="M320 391.75L320 405.62" stroke="#303030" stroke-width="0.85" fill="none"/>
<path d="M370.5 391.75L370.5 405.62" stroke="#303030" stroke-width="0.85" fill="none"/>
<path d="M437.5 391.75L437.5 405.62" stroke="#303030" stroke-width="0.85" fill="none"/>
<path d="M471.75 391.75L471.75 405.62" stroke="#303030" stroke-width="0.85" fill="none"/>
<path d="M543.75 391.75L543.75 405.62" stroke="#303030" stroke-width="0.85" fill="none"/>
<path d="M617.5 391.75L617.5 405.62" stroke="#303030" stroke-width="0.85" fill="none"/>
<path d="M685.5 391.75L685.5 405.62" stroke="#303030" stroke-width="0.85" fill="none"/>
<path d="M747.5 391.75L747.5 405.62" stroke="#303030" stroke-width="0.85" fill="none"/>
<path d="M788.25 391.75L788.25 405.62" stroke="#303030" stroke-width="0.85" fill="none"/>
<path d="M859.5 391.75L859.5 405.62" stroke="#303030" stroke-width="0.85" fill="none"/>
<path d="M930 391.75L930 405.62" stroke="#303030" stroke-width="0.85" fill="none"/>
<text x="323.6" y="401.75" font-size="7.4" fill="#151515" textLength="24.2">租赁费</text>
<text x="374.1" y="401.75" font-size="7.4" fill="#151515" textLength="57.5">扣件468十字扣件</text>
<text x="440.7" y="401.75" font-size="7.4" fill="#151515">只</text>
<text x="475.35" y="401.49" font-size="7.4" fill="#151515" textLength="39">2025/01/20</text>
<text x="547.35" y="401.49" font-size="7.4" fill="#151515" textLength="39">2025/01/31</text>
<text x="667.2" y="401.75" font-size="7.4" fill="#151515" textLength="16.8">50只</text>
<text x="718.1" y="401.49" font-size="7.4" fill="#151515" textLength="27.9">¥0.1500</text>
<text x="769.95" y="401.75" font-size="7.4" fill="#151515" textLength="16.8">12天</text>
<text x="833.8" y="401.49" font-size="7.4" fill="#151515" textLength="24.2">¥90.00</text>
<text x="908" y="401.75" font-size="7.4" fill="#151515" textLength="20.5">150只</text>
<path d="M320 419.5L930 419.5" stroke="#303030" stroke-width="0.85" fill="none"/>
<path d="M320 405.62L320 419.5" stroke="#303030" stroke-width="0.85" fill="none"/>
<path d="M617.5 405.62L617.5 419.5" stroke="#303030" stroke-width="0.85" fill="none"/>
<path d="M685.5 405.62L685.5 419.5" stroke="#303030" stroke-width="0.85" fill="none"/>
<path d="M788.25 405.62L788.25 419.5" stroke="#303030" stroke-width="0.85" fill="none"/>
<path d="M859.5 405.62L859.5 419.5" stroke="#303030" stroke-width="0.85" fill="none"/>
<path d="M930 405.62L930 419.5" stroke="#303030" stroke-width="0.85" fill="none"/>
<text x="323.8" y="415.62" font-size="7.4" font-weight="bold" fill="#0c0c0c" textLength="72.3">扣件468十字扣件小计</text>
<text x="656.2" y="415.62" font-size="7.4" fill="#151515" textLength="27.9">150&#160;&#160;只</text>
<text x="792.05" y="415.36" font-size="7.4" fill="#151515" textLength="27.9">¥315.00</text>
<path d="M320 433.38L930 433.38" stroke="#303030" stroke-width="0.85" fill="none"/>
<path d="M320 419.5L320 433.38" stroke="#303030" stroke-width="0.85" fill="none"/>
<path d="M370.5 419.5L370.5 433.38" stroke="#303030" stroke-width="0.85" fill="none"/>
<path d="M437.5 419.5L437.5 433.38" stroke="#303030" stroke-width="0.85" fill="none"/>
<path d="M471.75 419.5L471.75 433.38" stroke="#303030" stroke-width="0.85" fill="none"/>
<path d="M543.75 419.5L543.75 433.38" stroke="#303030" stroke-width="0.85" fill="none"/>
<path d="M617.5 419.5L617.5 433.38" stroke="#303030" stroke-width="0.85" fill="none"/>
<path d="M685.5 419.5L685.5 433.38" stroke="#303030" stroke-width="0.85" fill="none"/>
<path d="M747.5 419.5L747.5 433.38" stroke="#303030" stroke-width="0.85" fill="none"/>
<path d="M788.25 419.5L788.25 433.38" stroke="#303030" stroke-width="0.85" fill="none"/>
<path d="M859.5 419.5L859.5 433.38" stroke="#303030" stroke-width="0.85" fill="none"/>
<path d="M930 419.5L930 433.38" stroke="#303030" stroke-width="0.85" fill="none"/>
<text x="323.6" y="429.5" font-size="7.4" fill="#151515" textLength="24.2">租赁费</text>
<text x="374.1" y="429.5" font-size="7.4" fill="#151515" textLength="57.5">扣件468转向扣件</text>
<text x="440.7" y="429.5" font-size="7.4" fill="#151515">只</text>
<text x="475.35" y="429.24" font-size="7.4" fill="#151515" textLength="39">2025/01/17</text>
<text x="547.35" y="429.24" font-size="7.4" fill="#151515" textLength="39">2025/01/31</text>
<text x="663.5" y="429.5" font-size="7.4" fill="#151515" textLength="20.5">100只</text>
<text x="718.1" y="429.24" font-size="7.4" fill="#151515" textLength="27.9">¥0.1500</text>
<text x="769.95" y="429.5" font-size="7.4" fill="#151515" textLength="16.8">15天</text>
<text x="830.1" y="429.24" font-size="7.4" fill="#151515" textLength="27.9">¥225.00</text>
<text x="908" y="429.5" font-size="7.4" fill="#151515" textLength="20.5">100只</text>
<path d="M320 447.25L930 447.25" stroke="#303030" stroke-width="0.85" fill="none"/>
<path d="M320 433.38L320 447.25" stroke="#303030" stroke-width="0.85" fill="none"/>
<path d="M370.5 433.38L370.5 447.25" stroke="#303030" stroke-width="0.85" fill="none"/>
<path d="M437.5 433.38L437.5 447.25" stroke="#303030" stroke-width="0.85" fill="none"/>
<path d="M471.75 433.38L471.75 447.25" stroke="#303030" stroke-width="0.85" fill="none"/>
<path d="M543.75 433.38L543.75 447.25" stroke="#303030" stroke-width="0.85" fill="none"/>
<path d="M617.5 433.38L617.5 447.25" stroke="#303030" stroke-width="0.85" fill="none"/>
<path d="M685.5 433.38L685.5 447.25" stroke="#303030" stroke-width="0.85" fill="none"/>
<path d="M747.5 433.38L747.5 447.25" stroke="#303030" stroke-width="0.85" fill="none"/>
<path d="M788.25 433.38L788.25 447.25" stroke="#303030" stroke-width="0.85" fill="none"/>
<path d="M859.5 433.38L859.5 447.25" stroke="#303030" stroke-width="0.85" fill="none"/>
<path d="M930 433.38L930 447.25" stroke="#303030" stroke-width="0.85" fill="none"/>
<text x="323.6" y="443.37" font-size="7.4" fill="#151515" textLength="24.2">租赁费</text>
<text x="374.1" y="443.37" font-size="7.4" fill="#151515" textLength="57.5">扣件468转向扣件</text>
<text x="440.7" y="443.37" font-size="7.4" fill="#151515">只</text>
<text x="475.35" y="443.11" font-size="7.4" fill="#151515" textLength="39">2025/01/20</text>
<text x="547.35" y="443.11" font-size="7.4" fill="#151515" textLength="39">2025/01/31</text>
<text x="667.2" y="443.37" font-size="7.4" fill="#151515" textLength="16.8">50只</text>
<text x="718.1" y="443.11" font-size="7.4" fill="#151515" textLength="27.9">¥0.1500</text>
<text x="769.95" y="443.37" font-size="7.4" fill="#151515" textLength="16.8">12天</text>
<text x="833.8" y="443.11" font-size="7.4" fill="#151515" textLength="24.2">¥90.00</text>
<text x="908" y="443.37" font-size="7.4" fill="#151515" textLength="20.5">150只</text>
<path d="M320 461.12L930 461.12" stroke="#303030" stroke-width="0.85" fill="none"/>
<path d="M320 447.25L320 461.12" stroke="#303030" stroke-width="0.85" fill="none"/>
<path d="M617.5 447.25L617.5 461.12" stroke="#303030" stroke-width="0.85" fill="none"/>
<path d="M685.5 447.25L685.5 461.12" stroke="#303030" stroke-width="0.85" fill="none"/>
<path d="M788.25 447.25L788.25 461.12" stroke="#303030" stroke-width="0.85" fill="none"/>
<path d="M859.5 447.25L859.5 461.12" stroke="#303030" stroke-width="0.85" fill="none"/>
<path d="M930 447.25L930 461.12" stroke="#303030" stroke-width="0.85" fill="none"/>
<text x="323.8" y="457.25" font-size="7.4" font-weight="bold" fill="#0c0c0c" textLength="72.3">扣件468转向扣件小计</text>
<text x="656.2" y="457.25" font-size="7.4" fill="#151515" textLength="27.9">150&#160;&#160;只</text>
<text x="792.05" y="456.99" font-size="7.4" fill="#151515" textLength="27.9">¥315.00</text>
<path d="M320 477L930 477" stroke="#303030" stroke-width="0.85" fill="none"/>
<path d="M320 492.5L930 492.5" stroke="#303030" stroke-width="0.85" fill="none"/>
<path d="M320 508L930 508" stroke="#303030" stroke-width="0.85" fill="none"/>
<path d="M320 523.75L930 523.75" stroke="#303030" stroke-width="0.85" fill="none"/>
<path d="M320 537.5L930 537.5" stroke="#303030" stroke-width="0.85" fill="none"/>
<path d="M320 461.25L320 477" stroke="#303030" stroke-width="0.85" fill="none"/>
<path d="M437.5 461.25L437.5 477" stroke="#303030" stroke-width="0.85" fill="none"/>
<path d="M617.5 461.25L617.5 477" stroke="#303030" stroke-width="0.85" fill="none"/>
<path d="M747.5 461.25L747.5 477" stroke="#303030" stroke-width="0.85" fill="none"/>
<path d="M930 461.25L930 477" stroke="#303030" stroke-width="0.85" fill="none"/>
<path d="M320 477L320 492.5" stroke="#303030" stroke-width="0.85" fill="none"/>
<path d="M437.5 477L437.5 492.5" stroke="#303030" stroke-width="0.85" fill="none"/>
<path d="M617.5 477L617.5 492.5" stroke="#303030" stroke-width="0.85" fill="none"/>
<path d="M747.5 477L747.5 492.5" stroke="#303030" stroke-width="0.85" fill="none"/>
<path d="M930 477L930 492.5" stroke="#303030" stroke-width="0.85" fill="none"/>
<path d="M320 492.5L320 508" stroke="#303030" stroke-width="0.85" fill="none"/>
<path d="M437.5 492.5L437.5 508" stroke="#303030" stroke-width="0.85" fill="none"/>
<path d="M617.5 492.5L617.5 508" stroke="#303030" stroke-width="0.85" fill="none"/>
<path d="M747.5 492.5L747.5 508" stroke="#303030" stroke-width="0.85" fill="none"/>
<path d="M930 492.5L930 508" stroke="#303030" stroke-width="0.85" fill="none"/>
<path d="M320 508L320 523.75" stroke="#303030" stroke-width="0.85" fill="none"/>
<path d="M437.5 508L437.5 523.75" stroke="#303030" stroke-width="0.85" fill="none"/>
<path d="M930 508L930 523.75" stroke="#303030" stroke-width="0.85" fill="none"/>
<path d="M320 523.75L320 537.5" stroke="#303030" stroke-width="0.85" fill="none"/>
<path d="M807 523.75L807 537.5" stroke="#303030" stroke-width="0.85" fill="none"/>
<path d="M867.5 523.75L867.5 537.5" stroke="#303030" stroke-width="0.85" fill="none"/>
<path d="M930 523.75L930 537.5" stroke="#303030" stroke-width="0.85" fill="none"/>
<text x="323.8" y="472.07" font-size="7.4" fill="#151515" textLength="39">剩余押金：</text>
<text x="440" y="471.81" font-size="7.4" fill="#151515" textLength="20.5">¥0.00</text>
<text x="620.8" y="472.07" font-size="7.4" fill="#151515" textLength="68.6">剩余押金（大写）：</text>
<text x="750.8" y="472.07" font-size="7.4" fill="#151515">零</text>
<text x="323.8" y="487.7" font-size="7.4" fill="#151515" textLength="39">报停减免：</text>
<text x="440" y="487.44" font-size="7.4" fill="#151515" textLength="20.5">¥0.00</text>
<text x="323.8" y="503.2" font-size="7.4" fill="#151515" textLength="39">本期应收：</text>
<text x="440" y="502.94" font-size="7.4" fill="#151515" textLength="35.3">¥5,683.50</text>
<text x="620.8" y="503.2" font-size="7.4" fill="#151515" textLength="68.6">本期应收（大写）：</text>
<text x="750.8" y="503.2" font-size="7.4" fill="#151515" textLength="68.6">伍仟陆佰捌拾叁伍角</text>
<text x="323.8" y="518.82" font-size="7.4" fill="#151515" textLength="39">打印日期：</text>
<text x="440" y="518.82" font-size="7.4" fill="#151515" textLength="50.1">2025年2月19日</text>
<text x="751.2" y="533.57" font-size="7.4" font-weight="bold" fill="#0c0c0c" textLength="53.8">应收租金合计：</text>
<text x="830.5" y="533.32" font-size="7.4" fill="#151515" textLength="35.3">¥5,683.50</text>
<text x="349.5" y="568.45" font-size="7.4" font-weight="bold" fill="#0c0c0c" textLength="60">承租方（签章）：</text>
<text x="349.5" y="586.45" font-size="7.4" font-weight="bold" fill="#0c0c0c" textLength="24.2">日期：</text>
<text x="565" y="568.45" font-size="7.4" font-weight="bold" fill="#0c0c0c" textLength="60">出租方（签章）：</text>
<text x="565" y="586.45" font-size="7.4" font-weight="bold" fill="#0c0c0c" textLength="24.2">日期：</text>
<text x="748.8" y="568.45" font-size="7.4" font-weight="bold" fill="#0c0c0c" textLength="31.6">制表人：</text>
</svg>
<div id="txt"><span style="left:393.3px;top:18.33px;font-size:14.3px;width:93.2px">ZCJS250218001</span><span style="left:500.2px;top:18.5px;font-size:14px;width:67.8px">租出结算单</span><span style="left:138.2px;top:44.22px;font-size:11.6px;width:23.4px">主页</span><span style="left:190.6px;top:44.22px;font-size:11.6px;width:23px">工具</span><span style="left:70.91px;top:127.27px;font-size:11.5px;width:44.78px">对象创建</span><span style="left:190.5px;top:127.27px;font-size:11.5px;width:23.39px">保存</span><span style="left:314.31px;top:127.27px;font-size:11.5px;width:23.39px">编辑</span><span style="left:386.31px;top:127.27px;font-size:11.5px;width:44.78px">记录编辑</span><span style="left:455.31px;top:127.27px;font-size:11.5px;width:44.78px">打开对象</span><span style="left:545.5px;top:127.27px;font-size:11.5px;width:23.39px">视图</span><span style="left:628.31px;top:127.27px;font-size:11.5px;width:44.78px">记录导航</span><span style="left:702.5px;top:127.27px;font-size:11.5px;width:23.39px">关闭</span><span style="left:80.7px;top:101.13px;font-size:11.4px;width:23.2px">新建</span><span style="left:130.2px;top:101.13px;font-size:11.4px;width:23.2px">保存</span><span style="left:164.19px;top:101.13px;font-size:11.4px;width:55.01px">保存并关闭</span><span style="left:224.09px;top:101.13px;font-size:11.4px;width:55.01px">保存并新建</span><span style="left:295.1px;top:101.13px;font-size:11.4px;width:23.2px">删除</span><span style="left:333.6px;top:101.13px;font-size:11.4px;width:23.2px">取消</span><span style="left:377.7px;top:101.13px;font-size:11.4px;width:23.2px">收款</span><span style="left:415.7px;top:101.13px;font-size:11.4px;width:23.2px">确认</span><span style="left:465.7px;top:101.13px;font-size:11.4px;width:23.2px">打开</span><span style="left:509.89px;top:101.13px;font-size:11.4px;width:55.01px">打印结算单</span><span style="left:575.1px;top:101.13px;font-size:11.4px;width:23.2px">刷新</span><span style="left:614.3px;top:101.13px;font-size:11.4px;width:33.81px">上一条</span><span style="left:652.9px;top:101.13px;font-size:11.4px;width:33.81px">下一条</span><span style="left:702.1px;top:101.13px;font-size:11.4px;width:23.2px">关闭</span><span style="left:83px;top:159.01px;font-size:11.8px;width:56px">租出结算单</span><span style="left:84px;top:187.48px;font-size:11.5px;width:55px">结算单号:*</span><span style="left:279.5px;top:187.48px;font-size:11.5px;width:55px">租出合约:*</span><span style="left:484.5px;top:187.48px;font-size:11.5px;width:55px">开始日期:*</span><span style="left:687px;top:187.48px;font-size:11.5px;width:55px">截止日期:*</span><span style="left:148px;top:187.09px;font-size:12.2px;width:80.6px">ZCJS250218001</span><span style="left:341.6px;top:187.09px;font-size:12.2px;width:86px">ZCHY250217006</span><span style="left:547px;top:187.09px;font-size:12.2px;width:47.4px">2025/1/1</span><span style="left:749.6px;top:187.09px;font-size:12.2px;width:53.4px">2025/1/31</span><span style="left:84px;top:208.98px;font-size:11.5px;width:44px">分公司:*</span><span style="left:146.6px;top:208.98px;font-size:11.5px;width:33.6px">总公司</span><span style="left:279.5px;top:208.98px;font-size:11.5px;width:33.4px">客户:*</span><span style="left:341.6px;top:208.98px;font-size:11.5px;width:23px">倍旺</span><span style="left:484.5px;top:208.98px;font-size:11.5px;width:48.4px">项目名称:</span><span style="left:546.4px;top:208.98px;font-size:11.5px;width:45.2px">番禺花园</span><span style="left:687px;top:208.98px;font-size:11.5px;width:26.6px">租金:</span><span style="left:811px;top:208.59px;font-size:12.2px;width:52px">¥5,683.50</span><span style="left:84px;top:230.23px;font-size:11.5px;width:26.6px">赔偿:</span><span style="left:224.8px;top:229.84px;font-size:12.2px;width:30.4px">¥0.00</span><span style="left:279.5px;top:230.23px;font-size:11.5px;width:48.4px">其它费用:</span><span style="left:484.5px;top:230.23px;font-size:11.5px;width:48.4px">减免金额:</span><span style="left:687px;top:230.23px;font-size:11.5px;width:48.4px">应收金额:</span><span style="left:84px;top:251.98px;font-size:11.5px;width:48.4px">已收金额:</span><span style="left:224.8px;top:251.59px;font-size:12.2px;width:30.4px">¥0.00</span><span style="left:279.5px;top:251.98px;font-size:11.5px;width:48.4px">未收金额:</span><span style="left:279.5px;top:273.68px;font-size:11.5px;width:48.4px">计费方式:</span><span style="left:102.6px;top:313.71px;font-size:11.8px;width:23.6px">附件</span><span style="left:91px;top:356.68px;font-size:11.5px;width:23px">名称</span><span style="left:72.8px;top:522.88px;font-size:11.5px;width:27px">备注:</span><span style="left:72.8px;top:550.27px;font-size:11.5px;width:48.4px">建立用户:</span><span style="left:134.6px;top:549.27px;font-size:11.5px;width:33.6px">管理员</span><span style="left:274px;top:550.27px;font-size:11.5px;width:48.4px">建立时间:</span><span style="left:64px;top:579.47px;font-size:11.5px;width:63px">姓名: 管理员</span><span style="left:131.6px;top:579.07px;font-size:11.5px;width:4.99px">|</span><span style="left:143.4px;top:579.47px;font-size:11.5px;width:73px">分公司: 总公司</span><span style="left:552px;top:251.84px;font-size:12.3px;width:124.5px">总公司租出费用对账单</span><span style="left:882.5px;top:254.62px;font-size:6.7px;width:48.5px">第 1页，共 1页</span><span style="left:324.5px;top:278.93px;font-size:7.4px;width:38px">租出单位：</span><span style="left:373px;top:278.93px;font-size:7.4px;width:24px">总公司</span><span style="left:324.5px;top:291.53px;font-size:7.4px;width:38px">承租单位：</span><span style="left:373px;top:291.53px;font-size:7.4px;width:16.6px">倍旺</span><span style="left:752px;top:278.93px;font-size:7.4px;width:38px">项目名称：</span><span style="left:800.5px;top:278.93px;font-size:7.4px;width:31.5px">番禺花园</span><span style="left:752px;top:291.53px;font-size:7.4px;width:38px">结算日期：</span><span style="left:800.5px;top:292.19px;font-size:6.2px;width:66.5px">2025-01-01~2025-01-31</span><span style="left:330.45px;top:319.53px;font-size:7.4px;width:31.6px">费用类型</span><span style="left:396.6px;top:319.53px;font-size:7.4px;width:16.8px">品名</span><span style="left:447.23px;top:319.53px;font-size:7.4px;width:16.8px">单位</span><span style="left:492.95px;top:319.53px;font-size:7.4px;width:31.6px">开始时间</span><span style="left:565.83px;top:319.53px;font-size:7.4px;width:31.6px">截止时间</span><span style="left:636.7px;top:319.53px;font-size:7.4px;width:31.6px">计费数量</span><span style="left:701.7px;top:319.53px;font-size:7.4px;width:31.6px">单位租金</span><span style="left:760.48px;top:319.53px;font-size:7.4px;width:16.8px">天数</span><span style="left:805.38px;top:319.53px;font-size:7.4px;width:39px">金额（元）</span><span style="left:876.25px;top:319.53px;font-size:7.4px;width:39px">累计在租量</span><span style="left:323.6px;top:339.33px;font-size:7.4px;width:24.2px">租赁费</span><span style="left:374.1px;top:339.33px;font-size:7.4px;width:16.8px">钢管</span><span style="left:440.7px;top:339.33px;font-size:7.4px;width:9.4px">米</span><span style="left:475.35px;top:339.33px;font-size:7.4px;width:39px">2025/01/17</span><span style="left:547.35px;top:339.33px;font-size:7.4px;width:39px">2025/01/31</span><span style="left:659.8px;top:339.33px;font-size:7.4px;width:24.2px">1770米</span><span style="left:718.1px;top:339.33px;font-size:7.4px;width:27.9px">¥0.1500</span><span style="left:769.95px;top:339.33px;font-size:7.4px;width:16.8px">15天</span><span style="left:822.7px;top:339.33px;font-size:7.4px;width:35.3px">¥3,982.50</span><span style="left:904.3px;top:339.33px;font-size:7.4px;width:24.2px">1770米</span><span style="left:323.6px;top:353.2px;font-size:7.4px;width:24.2px">租赁费</span><span style="left:374.1px;top:353.2px;font-size:7.4px;width:16.8px">钢管</span><span style="left:440.7px;top:353.2px;font-size:7.4px;width:9.4px">米</span><span style="left:475.35px;top:353.2px;font-size:7.4px;width:39px">2025/01/20</span><span style="left:547.35px;top:353.2px;font-size:7.4px;width:39px">2025/01/31</span><span style="left:663.5px;top:353.2px;font-size:7.4px;width:20.5px">595米</span><span style="left:718.1px;top:353.2px;font-size:7.4px;width:27.9px">¥0.1500</span><span style="left:769.95px;top:353.2px;font-size:7.4px;width:16.8px">12天</span><span style="left:822.7px;top:353.2px;font-size:7.4px;width:35.3px">¥1,071.00</span><span style="left:904.3px;top:353.2px;font-size:7.4px;width:24.2px">2365米</span><span style="left:323.8px;top:367.08px;font-size:7.4px;width:31.6px">钢管小计</span><span style="left:652.5px;top:367.08px;font-size:7.4px;width:31.6px">2365  米</span><span style="left:792.05px;top:367.08px;font-size:7.4px;width:35.3px">¥5,053.50</span><span style="left:323.6px;top:380.95px;font-size:7.4px;width:24.2px">租赁费</span><span style="left:374.1px;top:380.95px;font-size:7.4px;width:57.5px">扣件468十字扣件</span><span style="left:440.7px;top:380.95px;font-size:7.4px;width:9.4px">只</span><span style="left:475.35px;top:380.95px;font-size:7.4px;width:39px">2025/01/17</span><span style="left:547.35px;top:380.95px;font-size:7.4px;width:39px">2025/01/31</span><span style="left:663.5px;top:380.95px;font-size:7.4px;width:20.5px">100只</span><span style="left:718.1px;top:380.95px;font-size:7.4px;width:27.9px">¥0.1500</span><span style="left:769.95px;top:380.95px;font-size:7.4px;width:16.8px">15天</span><span style="left:830.1px;top:380.95px;font-size:7.4px;width:27.9px">¥225.00</span><span style="left:908px;top:380.95px;font-size:7.4px;width:20.5px">100只</span><span style="left:323.6px;top:394.83px;font-size:7.4px;width:24.2px">租赁费</span><span style="left:374.1px;top:394.83px;font-size:7.4px;width:57.5px">扣件468十字扣件</span><span style="left:440.7px;top:394.83px;font-size:7.4px;width:9.4px">只</span><span style="left:475.35px;top:394.83px;font-size:7.4px;width:39px">2025/01/20</span><span style="left:547.35px;top:394.83px;font-size:7.4px;width:39px">2025/01/31</span><span style="left:667.2px;top:394.83px;font-size:7.4px;width:16.8px">50只</span><span style="left:718.1px;top:394.83px;font-size:7.4px;width:27.9px">¥0.1500</span><span style="left:769.95px;top:394.83px;font-size:7.4px;width:16.8px">12天</span><span style="left:833.8px;top:394.83px;font-size:7.4px;width:24.2px">¥90.00</span><span style="left:908px;top:394.83px;font-size:7.4px;width:20.5px">150只</span><span style="left:323.8px;top:408.7px;font-size:7.4px;width:72.3px">扣件468十字扣件小计</span><span style="left:656.2px;top:408.7px;font-size:7.4px;width:27.9px">150  只</span><span style="left:792.05px;top:408.7px;font-size:7.4px;width:27.9px">¥315.00</span><span style="left:323.6px;top:422.58px;font-size:7.4px;width:24.2px">租赁费</span><span style="left:374.1px;top:422.58px;font-size:7.4px;width:57.5px">扣件468转向扣件</span><span style="left:440.7px;top:422.58px;font-size:7.4px;width:9.4px">只</span><span style="left:475.35px;top:422.58px;font-size:7.4px;width:39px">2025/01/17</span><span style="left:547.35px;top:422.58px;font-size:7.4px;width:39px">2025/01/31</span><span style="left:663.5px;top:422.58px;font-size:7.4px;width:20.5px">100只</span><span style="left:718.1px;top:422.58px;font-size:7.4px;width:27.9px">¥0.1500</span><span style="left:769.95px;top:422.58px;font-size:7.4px;width:16.8px">15天</span><span style="left:830.1px;top:422.58px;font-size:7.4px;width:27.9px">¥225.00</span><span style="left:908px;top:422.58px;font-size:7.4px;width:20.5px">100只</span><span style="left:323.6px;top:436.45px;font-size:7.4px;width:24.2px">租赁费</span><span style="left:374.1px;top:436.45px;font-size:7.4px;width:57.5px">扣件468转向扣件</span><span style="left:440.7px;top:436.45px;font-size:7.4px;width:9.4px">只</span><span style="left:475.35px;top:436.45px;font-size:7.4px;width:39px">2025/01/20</span><span style="left:547.35px;top:436.45px;font-size:7.4px;width:39px">2025/01/31</span><span style="left:667.2px;top:436.45px;font-size:7.4px;width:16.8px">50只</span><span style="left:718.1px;top:436.45px;font-size:7.4px;width:27.9px">¥0.1500</span><span style="left:769.95px;top:436.45px;font-size:7.4px;width:16.8px">12天</span><span style="left:833.8px;top:436.45px;font-size:7.4px;width:24.2px">¥90.00</span><span style="left:908px;top:436.45px;font-size:7.4px;width:20.5px">150只</span><span style="left:323.8px;top:450.33px;font-size:7.4px;width:72.3px">扣件468转向扣件小计</span><span style="left:656.2px;top:450.33px;font-size:7.4px;width:27.9px">150  只</span><span style="left:792.05px;top:450.33px;font-size:7.4px;width:27.9px">¥315.00</span><span style="left:323.8px;top:465.16px;font-size:7.4px;width:39px">剩余押金：</span><span style="left:440px;top:465.16px;font-size:7.4px;width:20.5px">¥0.00</span><span style="left:620.8px;top:465.16px;font-size:7.4px;width:68.6px">剩余押金（大写）：</span><span style="left:750.8px;top:465.16px;font-size:7.4px;width:9.4px">零</span><span style="left:323.8px;top:480.78px;font-size:7.4px;width:39px">报停减免：</span><span style="left:440px;top:480.78px;font-size:7.4px;width:20.5px">¥0.00</span><span style="left:323.8px;top:496.28px;font-size:7.4px;width:39px">本期应收：</span><span style="left:440px;top:496.28px;font-size:7.4px;width:35.3px">¥5,683.50</span><span style="left:620.8px;top:496.28px;font-size:7.4px;width:68.6px">本期应收（大写）：</span><span style="left:750.8px;top:496.28px;font-size:7.4px;width:68.6px">伍仟陆佰捌拾叁伍角</span><span style="left:323.8px;top:511.91px;font-size:7.4px;width:39px">打印日期：</span><span style="left:440px;top:511.91px;font-size:7.4px;width:50.1px">2025年2月19日</span><span style="left:751.2px;top:526.65px;font-size:7.4px;width:53.8px">应收租金合计：</span><span style="left:830.5px;top:526.65px;font-size:7.4px;width:35.3px">¥5,683.50</span><span style="left:349.5px;top:561.53px;font-size:7.4px;width:60px">承租方（签章）：</span><span style="left:349.5px;top:579.53px;font-size:7.4px;width:24.2px">日期：</span><span style="left:565px;top:561.53px;font-size:7.4px;width:60px">出租方（签章）：</span><span style="left:565px;top:579.53px;font-size:7.4px;width:24.2px">日期：</span><span style="left:748.8px;top:561.53px;font-size:7.4px;width:31.6px">制表人：</span></div>
</body></html>
